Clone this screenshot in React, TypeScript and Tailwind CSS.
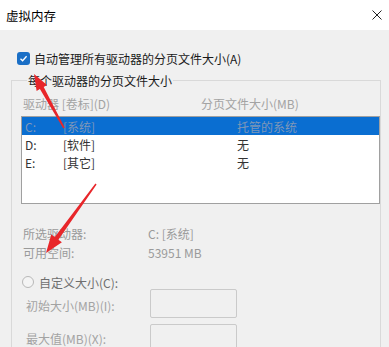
const font = { fontFamily: '"Noto Sans CJK SC", "Noto Sans", sans-serif' };

const drives = [
  { letter: "C:", label: "[系统]", size: "托管的系统", selected: true },
  { letter: "D:", label: "[软件]", size: "无", selected: false },
  { letter: "E:", label: "[其它]", size: "无", selected: false },
];

function Arrows() {
  return (
    <svg className="pointer-events-none absolute left-0 top-0" width="389" height="347" viewBox="0 0 389 347">
      <polygon
        fill="#e8262a"
        points="34,74 47,85.1 43.7,86.9 64.7,127.6 63.3,128.4 39.9,89.1 36.6,90.9"
      />
      <polygon
        fill="#e8262a"
        points="46,253 61.9,242.2 58.4,239.7 96.6,184.5 95.4,183.5 54.8,237.1 51.3,234.6"
      />
    </svg>
  );
}

export default function App() {
  return (
    <div className="relative flex h-[347px] w-[389px] flex-col overflow-hidden bg-[#f0f0f0] text-[12px] leading-[17px] text-[#1a1a1a]" style={font}>
      {/* title bar */}
      <div className="flex h-[30px] shrink-0 items-center justify-between bg-white pl-[6px] pr-[7px]">
        <span className="text-[12.5px] text-black">虚拟内存</span>
        <svg width="10" height="10" viewBox="0 0 10 10" className="mt-[-1px]">
          <path d="M0.5 0.5 L9.5 9.5 M9.5 0.5 L0.5 9.5" stroke="#222" strokeWidth="1" />
        </svg>
      </div>

      <div className="flex flex-col pt-[20px]">
        <label className="flex items-center pl-[17px]">
          <span className="flex h-[13px] w-[13px] items-center justify-center rounded-[3px] bg-[#1a6fc6]">
            <svg width="9" height="9" viewBox="0 0 9 9">
              <path d="M1.5 4.8 L3.6 6.8 L7.6 2.2" fill="none" stroke="white" strokeWidth="1.3" />
            </svg>
          </span>
          <span className="ml-[4px]">自动管理所有驱动器的分页文件大小(A)</span>
        </label>

        <fieldset className="ml-[11px] mt-[5px] h-[300px] w-[368px] border border-[#d9d9d9] pl-[9px]">
          <legend className="ml-[6px] px-[1px]">每个驱动器的分页文件大小</legend>
          <div className="mt-[6px] flex h-[17px] text-[#a3a3a3]">
            <span className="w-[180px] pl-[2px]">驱动器 [卷标](D)</span>
            <span>分页文件大小(MB)</span>
          </div>

          <div className="mt-[4px] h-[88px] w-[359px] border border-[#a0a0a0] bg-white">
            {drives.map((d) => (
              <div
                key={d.letter}
                className={
                  d.selected
                    ? "flex h-[18px] items-center bg-[#0a6ed1] text-[#7f97b8]"
                    : "flex h-[18px] items-center text-[#333]"
                }
              >
                <span className="w-[41px] pl-[3px]">{d.letter}</span>
                <span className="w-[174px]">{d.label}</span>
                <span>{d.size}</span>
              </div>
            ))}
          </div>

          <div className="mt-[20px] flex h-[19px] items-center text-[#9a9a9a]">
            <span className="w-[127px] pl-[2px]">所选驱动器:</span>
            <span>C: [系统]</span>
          </div>
          <div className="flex h-[19px] items-center text-[#9a9a9a]">
            <span className="w-[127px] pl-[2px]">可用空间:</span>
            <span>53951 MB</span>
          </div>

          <div className="mt-[11px] flex h-[18px] items-center">
            <span className="ml-[1px] h-[12px] w-[12px] rounded-full border border-[#b8b8b8] bg-[#f4f4f4]" />
            <span className="ml-[5px] text-[#6f6f6f]">自定义大小(C):</span>
          </div>

          <div className="mt-[-2px] flex items-center">
            <span className="w-[129px] pl-[5px] pt-[4px] text-[#a3a3a3]">初始大小(MB)(I):</span>
            <span className="h-[29px] w-[87px] rounded-[2px] border border-[#cacaca] bg-[#f0f0f0]" />
          </div>
          <div className="mt-[6px] flex items-center">
            <span className="w-[129px] pl-[5px] text-[#a3a3a3]">最大值(MB)(X):</span>
            <span className="h-[29px] w-[87px] rounded-[2px] border border-[#cacaca] bg-[#f0f0f0]" />
          </div>
        </fieldset>
      </div>

      <Arrows />
    </div>
  );
}
